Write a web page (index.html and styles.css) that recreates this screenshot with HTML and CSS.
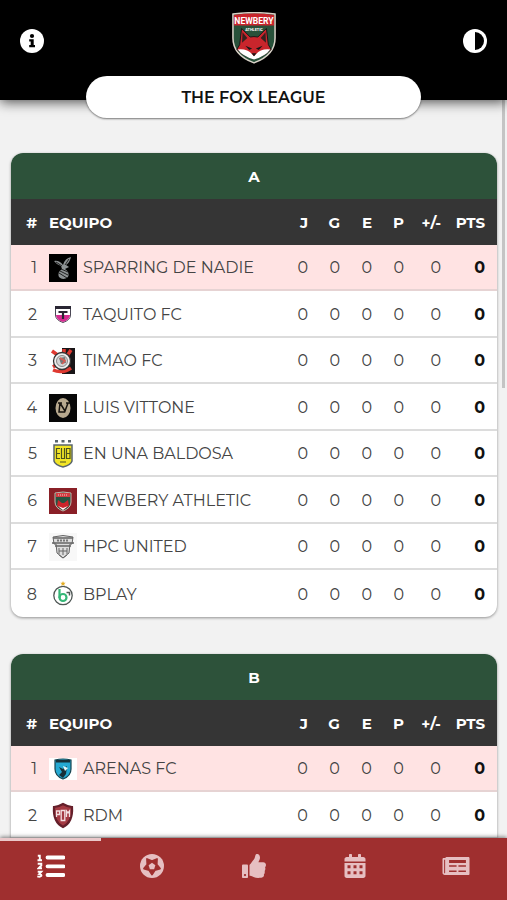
FILE: index.html
```html
<!DOCTYPE html>
<html lang="es">
<head>
<meta charset="utf-8">
<meta name="viewport" content="width=device-width, initial-scale=1">
<title>The Fox League</title>
<link rel="stylesheet" href="styles.css">
</head>
<body>
<header class="topbar">
  <button class="icon-button" type="button" aria-label="Información">
    <svg viewBox="0 0 24 24"><circle cx="12" cy="12" r="12" fill="#fff"/><circle cx="12" cy="7" r="2.1"/><path d="M9.200 10.300h4.500v5.700h1.300v2.200H9.200V16h1.500v-3.500H9.200z"/></svg>
  </button>
  <svg class="crest" viewBox="0 0 46 54" role="img" aria-label="Newbery Athletic">
    <path d="M1 2Q23-1 45 2V27Q45 45 23 53Q1 45 1 27Z" fill="#28513a" stroke="#d9d2c8" stroke-width="1.600"/>
    <path d="M2 3Q23 0 44 3V14H2Z" fill="#c9252c"/>
    <text x="23" y="12" class="crest-name">NEWBERY</text>
    <text x="23" y="19.500" class="crest-sub">ATHLETIC</text>
    <path d="M10 17L19 26Q23 25 27 26L36 17L38 34L41 39Q34 46 23 49Q12 46 5 39L8 34Z" fill="#c9252c" stroke="#161616" stroke-width="1"/>
    <path d="M11 21L16 27L10.500 32ZM35 21L30 27L35.500 32Z" fill="#35201e"/>
    <path d="M6 39Q16 38 21 44L23 46L25 44Q30 38 40 39Q35 46 23 49.500Q11 46 6 39Z" fill="#fff"/>
    <path d="M14 35L21 38L18 39.500ZM32 35L25 38L28 39.500ZM20.500 43H25.500L23 46Z" fill="#161616"/>
  </svg>
  <button class="icon-button" type="button" aria-label="Cambiar contraste">
    <svg viewBox="0 0 24 24"><circle cx="12" cy="12" r="12" fill="#fff"/><path d="M12 3a9 9 0 0 1 0 18z"/></svg>
  </button>
  <h1 class="league">THE FOX LEAGUE</h1>
</header>

<main class="content">
  <table class="group">
    <colgroup><col class="w-pos"><col><col class="w-num"><col class="w-num"><col class="w-num"><col class="w-num"><col class="w-diff"><col class="w-pts"></colgroup>
    <thead>
      <tr class="group-title"><th colspan="8">A</th></tr>
      <tr class="columns"><th>#</th><th class="team">EQUIPO</th><th>J</th><th>G</th><th>E</th><th>P</th><th>+/-</th><th class="pts">PTS</th></tr>
    </thead>
    <tbody>
      <tr><td>1</td><td class="team"><div class="club"><svg viewBox="0 0 28 28"><path d="M0 0h28v28H0z"/><path d="M5 7Q10 6 14 11Q16 4 22 3Q21 8 17 11L20 13L16 15Q21 18 19 23Q14 27 10 23Q8 18 13 15L12 12Q8 11 5 7" fill="#8d9294"/><path d="M10 19l8 5M11 17l8 4M12 15l7 3M7 8l6 4M20 5l-4 6" stroke="#222" fill="none"/></svg>SPARRING DE NADIE</div></td><td>0</td><td>0</td><td>0</td><td>0</td><td>0</td><td class="pts">0</td></tr>
      <tr><td>2</td><td class="team"><div class="club"><svg viewBox="0 0 28 28"><path d="M6.500 6h15v8q0 5-7.500 7.500q-7.500-2.500-7.500-7.500z" fill="#fff" stroke="#4a4654" stroke-width="1"/><path d="M6 5h16v3H6z" fill="#292633"/><path d="M7 14h14q0 4.500-7 7q-7-2.500-7-7" fill="#d52c91"/><path d="M9.500 11h9M14 11v7" stroke="#292633" stroke-width="2.200"/></svg>TAQUITO FC</div></td><td>0</td><td>0</td><td>0</td><td>0</td><td>0</td><td class="pts">0</td></tr>
      <tr><td>3</td><td class="team"><div class="club"><svg viewBox="0 0 28 28"><path d="M13 1h13v26H13z" fill="#181517"/><path d="M3 4l7 5M22 3l-4 6M4 20l6-4M4 23q9 4 18-2M15 2v4" stroke="#df3931" stroke-width="3.500" fill="none"/><circle cx="13" cy="14" r="8.500" fill="#eee" stroke="#333" stroke-width="1.300"/><circle cx="13" cy="14" r="5.500" fill="#d5d5d5" stroke="#888"/><path d="M10 11l6-1l1 6l-5 1z" fill="#777"/><path d="M11 11l5 3l-3 3" stroke="#df5951" stroke-width="1.500" fill="none"/></svg>TIMAO FC</div></td><td>0</td><td>0</td><td>0</td><td>0</td><td>0</td><td class="pts">0</td></tr>
      <tr><td>4</td><td class="team"><div class="club"><svg viewBox="0 0 28 28"><path d="M0 0h28v28H0z" fill="#080808"/><ellipse cx="14" cy="14" rx="7.500" ry="10" fill="#b9aa8f"/><path d="M11 9l-1 9h6M11 9l5 8l3-8M9 9h4M17 9h4" fill="none" stroke="#17130e" stroke-width="1.500"/></svg>LUIS VITTONE</div></td><td>0</td><td>0</td><td>0</td><td>0</td><td>0</td><td class="pts">0</td></tr>
      <tr><td>5</td><td class="team"><div class="club"><svg viewBox="0 0 28 28"><path d="M5 5h18v16q-1 4-9 6q-8-2-9-6z" fill="#f2e526" stroke="#59656d" stroke-width="1.500"/><path d="M7.500 0v2.500M14 0v2.500M20.500 0v2.500" stroke="#59656d" stroke-width="3"/><path d="M11 8.500H7.500v10H11M7.500 13.500H11M12.500 8v10.500h3V8M17.500 8.500h3.500v10h-3.500zM17.500 13.500H21M11 22h6" fill="none" stroke="#4c511f" stroke-width="1.200"/></svg>EN UNA BALDOSA</div></td><td>0</td><td>0</td><td>0</td><td>0</td><td>0</td><td class="pts">0</td></tr>
      <tr><td>6</td><td class="team"><div class="club"><svg viewBox="0 0 28 28"><path d="M0 1h28v26H0z" fill="#8a2027"/><path d="M6 6q8-2 16 0v9q0 6-8 9q-8-3-8-9z" fill="#285340" stroke="#c9b6ab"/><path d="M7 6h14v4H7z" fill="#d33b40"/><path d="M9 8h10" stroke="#edcfcc" stroke-dasharray="1 1"/><path d="M9 13l4 3h2l4-3l1 6l-6 4l-6-4z" fill="#cc252b"/><path d="M9 19l5 2l5-2l-5 4z" fill="#fff"/></svg>NEWBERY ATHLETIC</div></td><td>0</td><td>0</td><td>0</td><td>0</td><td>0</td><td class="pts">0</td></tr>
      <tr><td>7</td><td class="team"><div class="club"><svg viewBox="0 0 28 28"><path d="M0 0h28v28H0z" fill="#f8f8f8"/><path d="M4 4q10-3 20 0l-1 7h-2l-1 9l-6 5l-6-5l-1-9H5z" fill="#ddd" stroke="#666"/><path d="M4 5h20M3 10h22M6 13h16" stroke="#666" stroke-width="1.600"/><path d="M10 15v6M14 15v7M18 15v6M10 18h8M10 22l4 3l4-3" fill="none" stroke="#666"/><path d="M8 7.500h12" stroke="#777" stroke-width="2" stroke-dasharray="2 1"/></svg>HPC UNITED</div></td><td>0</td><td>0</td><td>0</td><td>0</td><td>0</td><td class="pts">0</td></tr>
      <tr><td>8</td><td class="team"><div class="club"><svg viewBox="0 0 28 28"><path d="M14 0l.7 1.800h2l-1.500 1.200l.5 2l-1.700-1.200l-1.700 1.200l.5-2l-1.500-1.200h2z" fill="#e3ac20"/><circle cx="14" cy="14.500" r="9.200" fill="#fff" stroke="#4f5755" stroke-width="1.300"/><path d="M10.500 8v9" stroke="#35b777" stroke-width="2.200"/><circle cx="14" cy="16.500" r="3.500" fill="none" stroke="#35b777" stroke-width="2.200"/><path d="M17.500 11.500h3v3" fill="none" stroke="#4f5755" stroke-width="1.500"/></svg>BPLAY</div></td><td>0</td><td>0</td><td>0</td><td>0</td><td>0</td><td class="pts">0</td></tr>
    </tbody>
  </table>

  <table class="group group-open">
    <colgroup><col class="w-pos"><col><col class="w-num"><col class="w-num"><col class="w-num"><col class="w-num"><col class="w-diff"><col class="w-pts"></colgroup>
    <thead>
      <tr class="group-title"><th colspan="8">B</th></tr>
      <tr class="columns"><th>#</th><th class="team">EQUIPO</th><th>J</th><th>G</th><th>E</th><th>P</th><th>+/-</th><th class="pts">PTS</th></tr>
    </thead>
    <tbody>
      <tr><td>1</td><td class="team"><div class="club"><svg viewBox="0 0 28 28"><path d="M0 3h28v22H0z" fill="#fff"/><path d="M6 5q8-2 16 0v9q0 7-8 10q-8-3-8-10z" fill="#25a9d3" stroke="#17434f" stroke-width="1.200"/><path d="M7 5h14v2.500H7zM10 20l3-3l-3-5l4 2l4-3l-1 8l-3 4z" fill="#183039"/><path d="M14 11l5 2l-3 3z" fill="#e4f6fa"/></svg>ARENAS FC</div></td><td>0</td><td>0</td><td>0</td><td>0</td><td>0</td><td class="pts">0</td></tr>
      <tr><td>2</td><td class="team"><div class="club"><svg viewBox="0 0 28 28"><path d="M14 2q5 3 9 3q1 15-9 20Q4 20 5 5q4 0 9-3z" fill="#a43a43" stroke="#641f2a" stroke-width="2.200"/><path d="M7.500 15V9h3v3.500h-3M12.200 18.500V8.500h3.600v10zM17.500 15V9l1.500 2l1.500-2v6" fill="none" stroke="#f3dfe1" stroke-width="1.300"/></svg>RDM</div></td><td>0</td><td>0</td><td>0</td><td>0</td><td>0</td><td class="pts">0</td></tr>
    </tbody>
  </table>
  <div class="scroll-thumb"></div>
</main>

<nav class="tabs">
  <a class="tab active" href="#posiciones" aria-label="Posiciones"><svg class="wide" viewBox="0 0 28 24"><path d="M10.500 3.500h16M10.500 12.300h16M10.500 21h16" stroke="currentColor" stroke-width="3.800" stroke-linecap="round"/><path d="M.8 1.700h2V6M.5 6.300h4.500M.7 9.700h3.600v1.800L1.500 14.300H5M.7 17.800h3.600l-2 2.200q2.500.2 2 1.900q-1.200 1.400-4 .4" fill="none" stroke="currentColor" stroke-width="1.900"/></svg></a>
  <a class="tab" href="#partidos" aria-label="Partidos"><svg viewBox="0 0 24 24"><circle cx="12" cy="12" r="12" fill="currentColor"/><path d="M12 20.500L9.200 16.200L4 14.600L7.300 10.500L7 5L12 7L17 5L16.700 10.500L20 14.600L14.800 16.200Z" fill="#9f2f2f" stroke="#9f2f2f" stroke-width="1.800" stroke-linejoin="round"/><path d="M12 8.700l3.400 2.500l-1.300 4H9.900l-1.300-4z" fill="currentColor"/></svg></a>
  <a class="tab" href="#votar" aria-label="Votar"><svg viewBox="0 0 512 512" fill="currentColor"><path d="M104 224H24c-13.300 0-24 10.700-24 24v240c0 13.300 10.700 24 24 24h80c13.300 0 24-10.700 24-24V248c0-13.300-10.700-24-24-24zM64 472c-13.300 0-24-10.700-24-24s10.700-24 24-24 24 10.700 24 24-10.700 24-24 24zM384 81.500c0 42.400-26 66.200-33.300 94.500h101.700c33.400 0 59.400 27.700 59.600 58.100.1 18-7.500 37.300-19.400 49.200l-.1.100c9.800 23.300 8.200 56-9.300 79.500 8.700 25.900-.1 57.700-16.400 74.800 4.300 17.600 2.200 32.600-6.100 44.600C440.300 511.600 389.600 512 346.800 512H344c-48.300 0-87.800-17.600-119.600-31.700-16-7.100-36.800-15.900-52.700-16.200-6.500-.1-11.800-5.500-11.800-12V238.300c0-3.200 1.300-6.300 3.600-8.500 39.600-39.100 56.600-80.600 89.100-113.100 14.800-14.800 20.200-37.200 25.400-58.900C282.500 39.300 291.800 0 312 0c24 0 72 8 72 81.500z"/></svg></a>
  <a class="tab" href="#calendario" aria-label="Calendario"><svg viewBox="0 0 448 512" fill="currentColor"><path fill-rule="evenodd" d="M0 464c0 26.500 21.500 48 48 48h352c26.500 0 48-21.500 48-48V192H0zM64 240h64v64H64zm128 0h64v64h-64zm128 0h64v64h-64zM64 368h64v64H64zm128 0h64v64h-64zm128 0h64v64h-64zM448 160v-48c0-26.500-21.500-48-48-48h-48V16c0-9-7-16-16-16h-32c-9 0-16 7-16 16v48H160V16c0-9-7-16-16-16h-32c-9 0-16 7-16 16v48H48c-26.500 0-48 21.500-48 48v48z"/></svg></a>
  <a class="tab" href="#noticias" aria-label="Noticias"><svg class="wide" viewBox="0 0 576 512" fill="currentColor"><path fill-rule="evenodd" d="M552 64H88c-13 0-24 8-28 20H24c-13 0-24 11-24 24v292c0 27 21 48 48 48h504c13 0 24-11 24-24V88c0-13-11-24-24-24zM35 400V120h21v280c0 17-21 17-21 0zM140 128h360v64H140zm0 112h160v32H140zm200 0h160v32H340zM140 352h160v32H140zm200 0h160v32H340z"/></svg></a>
</nav>
</body>
</html>
```

FILE: styles.css
```css
* { box-sizing: border-box; }

body {
  margin: 0;
  height: 100vh;
  display: flex;
  flex-direction: column;
  overflow: hidden;
  background: #f2f2f2;
  color: #111;
  font-family: Montserrat, Inter, "Open Sans", sans-serif;
  font-size: 16px;
}

.topbar {
  position: relative;
  z-index: 2;
  flex: none;
  height: 100px;
  padding: 12px 20px 0;
  display: flex;
  align-items: flex-start;
  justify-content: space-between;
  background: #000;
  box-shadow: 0 2px 12px rgba(0, 0, 0, .7);
}

.icon-button {
  margin: 17px 0 0;
  padding: 0;
  border: 0;
  background: none;
}

.icon-button svg {
  display: block;
  width: 24px;
  height: 24px;
}

.crest {
  width: 44px;
  height: 52px;
}

.crest-name,
.crest-sub {
  fill: #fff;
  font-family: Roboto, sans-serif;
  font-size: 9px;
  font-weight: 700;
  text-anchor: middle;
}

.crest-sub {
  font-size: 4px;
}

.league {
  position: absolute;
  top: 76px;
  left: 17%;
  right: 17%;
  margin: 0;
  padding-top: 2px;
  border-radius: 22px;
  background: #fff;
  box-shadow: 0 1px 2px rgba(0, 0, 0, .5);
  font-size: 16px;
  font-weight: 600;
  line-height: 40px;
  text-align: center;
}

.content {
  position: relative;
  flex: 1;
  min-height: 0;
  overflow: hidden;
  padding: 53px 10px 0 11px;
}

.group {
  width: 100%;
  margin-bottom: 37px;
  border-spacing: 0;
  border-radius: 12px;
  overflow: hidden;
  background: #fff;
  box-shadow: 0 1px 3px rgba(0, 0, 0, .4);
  table-layout: fixed;
}

.group-open {
  border-radius: 12px 12px 0 0;
}

.w-pos { width: 26px; }
.w-num { width: 32px; }
.w-diff { width: 37px; }
.w-pts { width: 56px; }

.group tr { height: 46px; }
.group tbody tr:nth-child(even) { height: 47px; }

.group th,
.group td {
  padding: 2px 0 0;
  text-align: right;
  line-height: 24px;
}

.group th {
  color: #fff;
  font-size: 15px;
  font-weight: 700;
}

.group-title { background: #2d523a; }
.group .group-title th { text-align: center; }
.columns { background: #353535; }

.group td {
  border-bottom: 2px solid #dcdcdc;
  color: #444;
}

.group tbody tr:nth-child(8) td { border-bottom: 0; }
.group tbody tr:first-child { background: #ffe3e3; }
.group tbody tr:first-child td { border-color: #e6d3d3; }

.group .team {
  padding-left: 12px;
  text-align: left;
}

.club {
  display: flex;
  align-items: center;
  gap: 6px;
  white-space: nowrap;
}

.club svg {
  flex: none;
  width: 28px;
  height: 28px;
}

.group .pts { padding-right: 12px; }

.group td.pts {
  color: #111;
  font-weight: 700;
}

.scroll-thumb {
  position: absolute;
  top: 0;
  right: 2px;
  width: 3px;
  height: 39%;
  background: #c4c4c4;
}

.tabs {
  position: relative;
  z-index: 2;
  flex: none;
  height: 62px;
  display: flex;
  background: #9f2f2f;
  box-shadow: 0 -1px 4px rgba(0, 0, 0, .5);
}

.tab {
  flex: 1;
  padding-top: 13px;
  border-top: 3px solid transparent;
  display: flex;
  justify-content: center;
  align-items: flex-start;
  color: #e6bfc2;
}

.tab svg {
  width: 24px;
  height: 24px;
}

.tab .wide {
  width: 28px;
}

.tab.active {
  border-color: #eac8ca;
  color: #fff;
}
```
